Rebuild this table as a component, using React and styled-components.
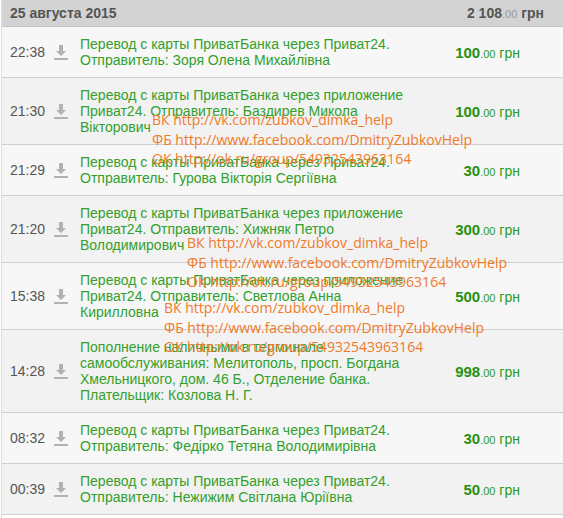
import React from 'react';
import styled, { createGlobalStyle } from 'styled-components';

const GlobalStyle = createGlobalStyle`
  body {
    margin: 0;
    background: #fff;
    font-family: 'Liberation Sans', Arial, sans-serif;
  }
`;

const Panel = styled.div`
  position: relative;
  width: 562px;
  height: 518px;
  overflow: hidden;
  border-left: 1px solid #ddd;
  margin-left: 1px;
  box-sizing: border-box;
`;

const DayHeader = styled.div`
  display: flex;
  justify-content: space-between;
  align-items: center;
  height: 26px;
  padding: 0 19px 0 8px;
  background: #d3d3d3;
  border-bottom: 1px solid #c4c4c4;
  color: #555;
  font-size: 14px;
  font-weight: bold;
`;

const Cents = styled.span`
  font-size: 11px;
  font-weight: normal;
  color: ${(p) => p.color || '#999'};
`;

const Row = styled.div`
  display: flex;
  align-items: center;
  padding: 9px 0;
  background: ${(p) => (p.alt ? '#f2f2f2' : '#f7f7f7')};
  border-bottom: 1px solid #cfcfcf;
`;

const Time = styled.div`
  width: 52px;
  box-sizing: border-box;
  padding-left: 8px;
  flex-shrink: 0;
  color: #555;
  font-size: 14px;
`;

const IconBox = styled.div`
  width: 26px;
  flex-shrink: 0;
  display: flex;
  align-items: center;
`;

const Description = styled.div`
  flex: 1;
  color: #33a02c;
  font-size: 14px;
  line-height: 16px;
`;

const Amount = styled.div`
  width: 148px;
  box-sizing: border-box;
  flex-shrink: 0;
  text-align: right;
  padding-right: 43px;
  color: #2e9a1a;
  font-size: 14px;
  white-space: nowrap;
`;

const Whole = styled.b`
  font-size: 15px;
  color: #28900f;
`;

const Watermark = styled.div`
  position: absolute;
  left: ${(p) => p.x}px;
  top: ${(p) => p.y}px;
  color: #f07a2a;
  font-family: 'Open Sans', sans-serif;
  font-size: 14px;
  line-height: 19.5px;
  white-space: nowrap;
  pointer-events: none;
`;

const DownloadIcon = () => (
  <svg width="14" height="18" viewBox="0 0 14 18">
    <path d="M5 2h4v6h3l-5 5-5-5h3z" fill="#b2b2b2" />
    <rect x="0" y="15" width="14" height="2" fill="#b2b2b2" />
  </svg>
);

const rows = [
  { time: '22:38', text: 'Перевод с карты ПриватБанка через Приват24. Отправитель: Зоря Олена Михайлівна', sum: '100' },
  { time: '21:30', text: 'Перевод с карты ПриватБанка через приложение Приват24. Отправитель: Баздирев Микола Вікторович', sum: '100' },
  { time: '21:29', text: 'Перевод с карты ПриватБанка через Приват24. Отправитель: Гурова Вікторія Сергіївна', sum: '30' },
  { time: '21:20', text: 'Перевод с карты ПриватБанка через приложение Приват24. Отправитель: Хижняк Петро Володимирович', sum: '300' },
  { time: '15:38', text: 'Перевод с карты ПриватБанка через приложение Приват24. Отправитель: Светлова Анна Кирилловна', sum: '500' },
  { time: '14:28', text: 'Пополнение наличными в терминале самообслуживания: Мелитополь, просп. Богдана Хмельницкого, дом. 46 Б., Отделение банка. Плательщик: Козлова Н. Г.', sum: '998' },
  { time: '08:32', text: 'Перевод с карты ПриватБанка через Приват24. Отправитель: Федірко Тетяна Володимирівна', sum: '30' },
  { time: '00:39', text: 'Перевод с карты ПриватБанка через Приват24. Отправитель: Нежижим Світлана Юріївна', sum: '50' },
];

const marks = [
  { x: 150, y: 110 },
  { x: 185, y: 233 },
  { x: 162, y: 298 },
];

const links = [
  'ВК http://vk.com/zubkov_dimka_help',
  'ФБ http://www.facebook.com/DmitryZubkovHelp',
  'ОК http://ok.ru/group/54932543963164',
];

export default function App() {
  return (
    <>
      <GlobalStyle />
      <Panel>
        <DayHeader>
          <span>25 августа 2015</span>
          <span>
            2 108<Cents>.00</Cents> грн
          </span>
        </DayHeader>
        {rows.map((r, i) => (
          <Row key={r.time} alt={i % 2 === 1}>
            <Time>{r.time}</Time>
            <IconBox>
              <DownloadIcon />
            </IconBox>
            <Description>{r.text}</Description>
            <Amount>
              <Whole>{r.sum}</Whole>
              <Cents color="#2e9a1a">.00</Cents> грн
            </Amount>
          </Row>
        ))}
        {marks.map((m) => (
          <Watermark key={m.y} x={m.x} y={m.y}>
            {links.map((l) => (
              <div key={l}>{l}</div>
            ))}
          </Watermark>
        ))}
      </Panel>
    </>
  );
}
